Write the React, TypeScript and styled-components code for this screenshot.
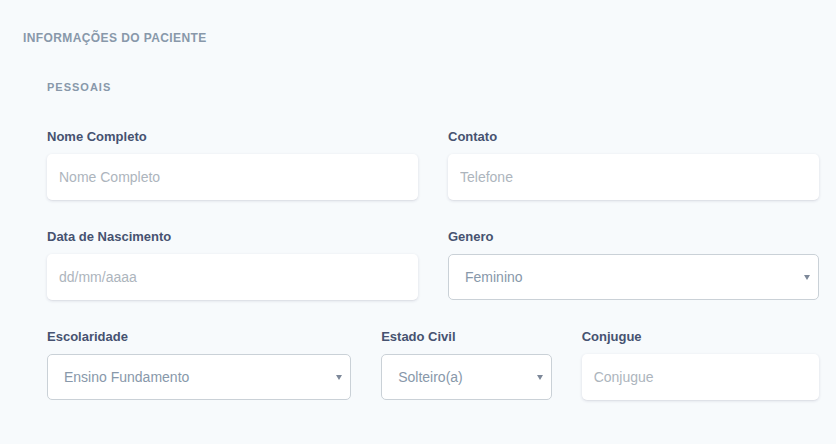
import React from "react";
import styled, { createGlobalStyle } from "styled-components";

const GlobalStyle = createGlobalStyle`
  html, body { margin: 0; padding: 0; background: #f7fafc; }
  body { font-family: "Liberation Sans", Arial, sans-serif; }
  * { box-sizing: border-box; }
`;

const Page = styled.div`
  padding: 30px 17px 17px 23px;
  background: #f7fafc;
`;

const Heading = styled.h6`
  margin: 0;
  font-size: 12px;
  line-height: 16px;
  font-weight: 700;
  letter-spacing: 0.4px;
  text-transform: uppercase;
  color: #8898aa;
`;

const Section = styled.div`
  padding-left: 24px;
  padding-top: 33px;
`;

const SubHeading = styled.h6`
  margin: 0 0 32px;
  font-size: 11px;
  line-height: 16px;
  font-weight: 700;
  letter-spacing: 1px;
  text-transform: uppercase;
  color: #8898aa;
`;

const Row = styled.div`
  display: flex;
  margin: 0 -15px;
`;

const Col = styled.div<{ $span: number }>`
  flex: 0 0 ${(p) => (p.$span / 12) * 100}%;
  max-width: ${(p) => (p.$span / 12) * 100}%;
  padding: 0 15px;
`;

const Group = styled.div`
  margin-bottom: 27px;
`;

const Label = styled.label`
  display: block;
  font-size: 13px;
  line-height: 20px;
  font-weight: 700;
  color: #465270;
  margin-bottom: 7px;
`;

const Input = styled.input`
  display: block;
  width: 100%;
  height: 46px;
  padding: 0 12px;
  border: 0;
  border-radius: 5px;
  background: #fff;
  box-shadow: 0 1px 3px rgba(50, 50, 93, 0.15), 0 1px 0 rgba(0, 0, 0, 0.02);
  font-family: "Liberation Sans", Arial, sans-serif;
  font-size: 14px;
  color: #8898aa;
  outline: none;
  &::placeholder { color: #adb5bd; }
`;

const SelectWrap = styled.div`
  position: relative;
  &::after {
    content: "";
    position: absolute;
    right: 9px;
    top: 50%;
    margin-top: -2px;
    border-left: 3px solid transparent;
    border-right: 3px solid transparent;
    border-top: 5px solid #7d8899;
    pointer-events: none;
  }
`;

const Select = styled.select`
  display: block;
  width: 100%;
  height: 46px;
  padding: 0 24px 0 16px;
  border: 1px solid #cad1d7;
  border-radius: 5px;
  background: #fff;
  appearance: none;
  -webkit-appearance: none;
  font-family: "Liberation Sans", Arial, sans-serif;
  font-size: 14px;
  color: #8898aa;
  outline: none;
`;

type FieldProps = { label: string; placeholder: string };

const TextField = ({ label, placeholder }: FieldProps) => (
  <Group>
    <Label>{label}</Label>
    <Input placeholder={placeholder} />
  </Group>
);

const SelectField = ({ label, options }: { label: string; options: string[] }) => (
  <Group>
    <Label>{label}</Label>
    <SelectWrap>
      <Select defaultValue={options[0]}>
        {options.map((o) => (
          <option key={o}>{o}</option>
        ))}
      </Select>
    </SelectWrap>
  </Group>
);

export default function App() {
  return (
    <>
      <GlobalStyle />
      <Page>
        <Heading>Informações do Paciente</Heading>
        <Section>
          <SubHeading>Pessoais</SubHeading>
          <Row>
            <Col $span={6}>
              <TextField label="Nome Completo" placeholder="Nome Completo" />
            </Col>
            <Col $span={6}>
              <TextField label="Contato" placeholder="Telefone" />
            </Col>
          </Row>
          <Row>
            <Col $span={6}>
              <TextField label="Data de Nascimento" placeholder="dd/mm/aaaa" />
            </Col>
            <Col $span={6}>
              <SelectField label="Genero" options={["Feminino", "Masculino"]} />
            </Col>
          </Row>
          <Row>
            <Col $span={5}>
              <SelectField
                label="Escolaridade"
                options={["Ensino Fundamento", "Ensino Médio", "Ensino Superior"]}
              />
            </Col>
            <Col $span={3}>
              <SelectField
                label="Estado Civil"
                options={["Solteiro(a)", "Casado(a)", "Divorciado(a)", "Viúvo(a)"]}
              />
            </Col>
            <Col $span={4}>
              <TextField label="Conjugue" placeholder="Conjugue" />
            </Col>
          </Row>
        </Section>
      </Page>
    </>
  );
}
